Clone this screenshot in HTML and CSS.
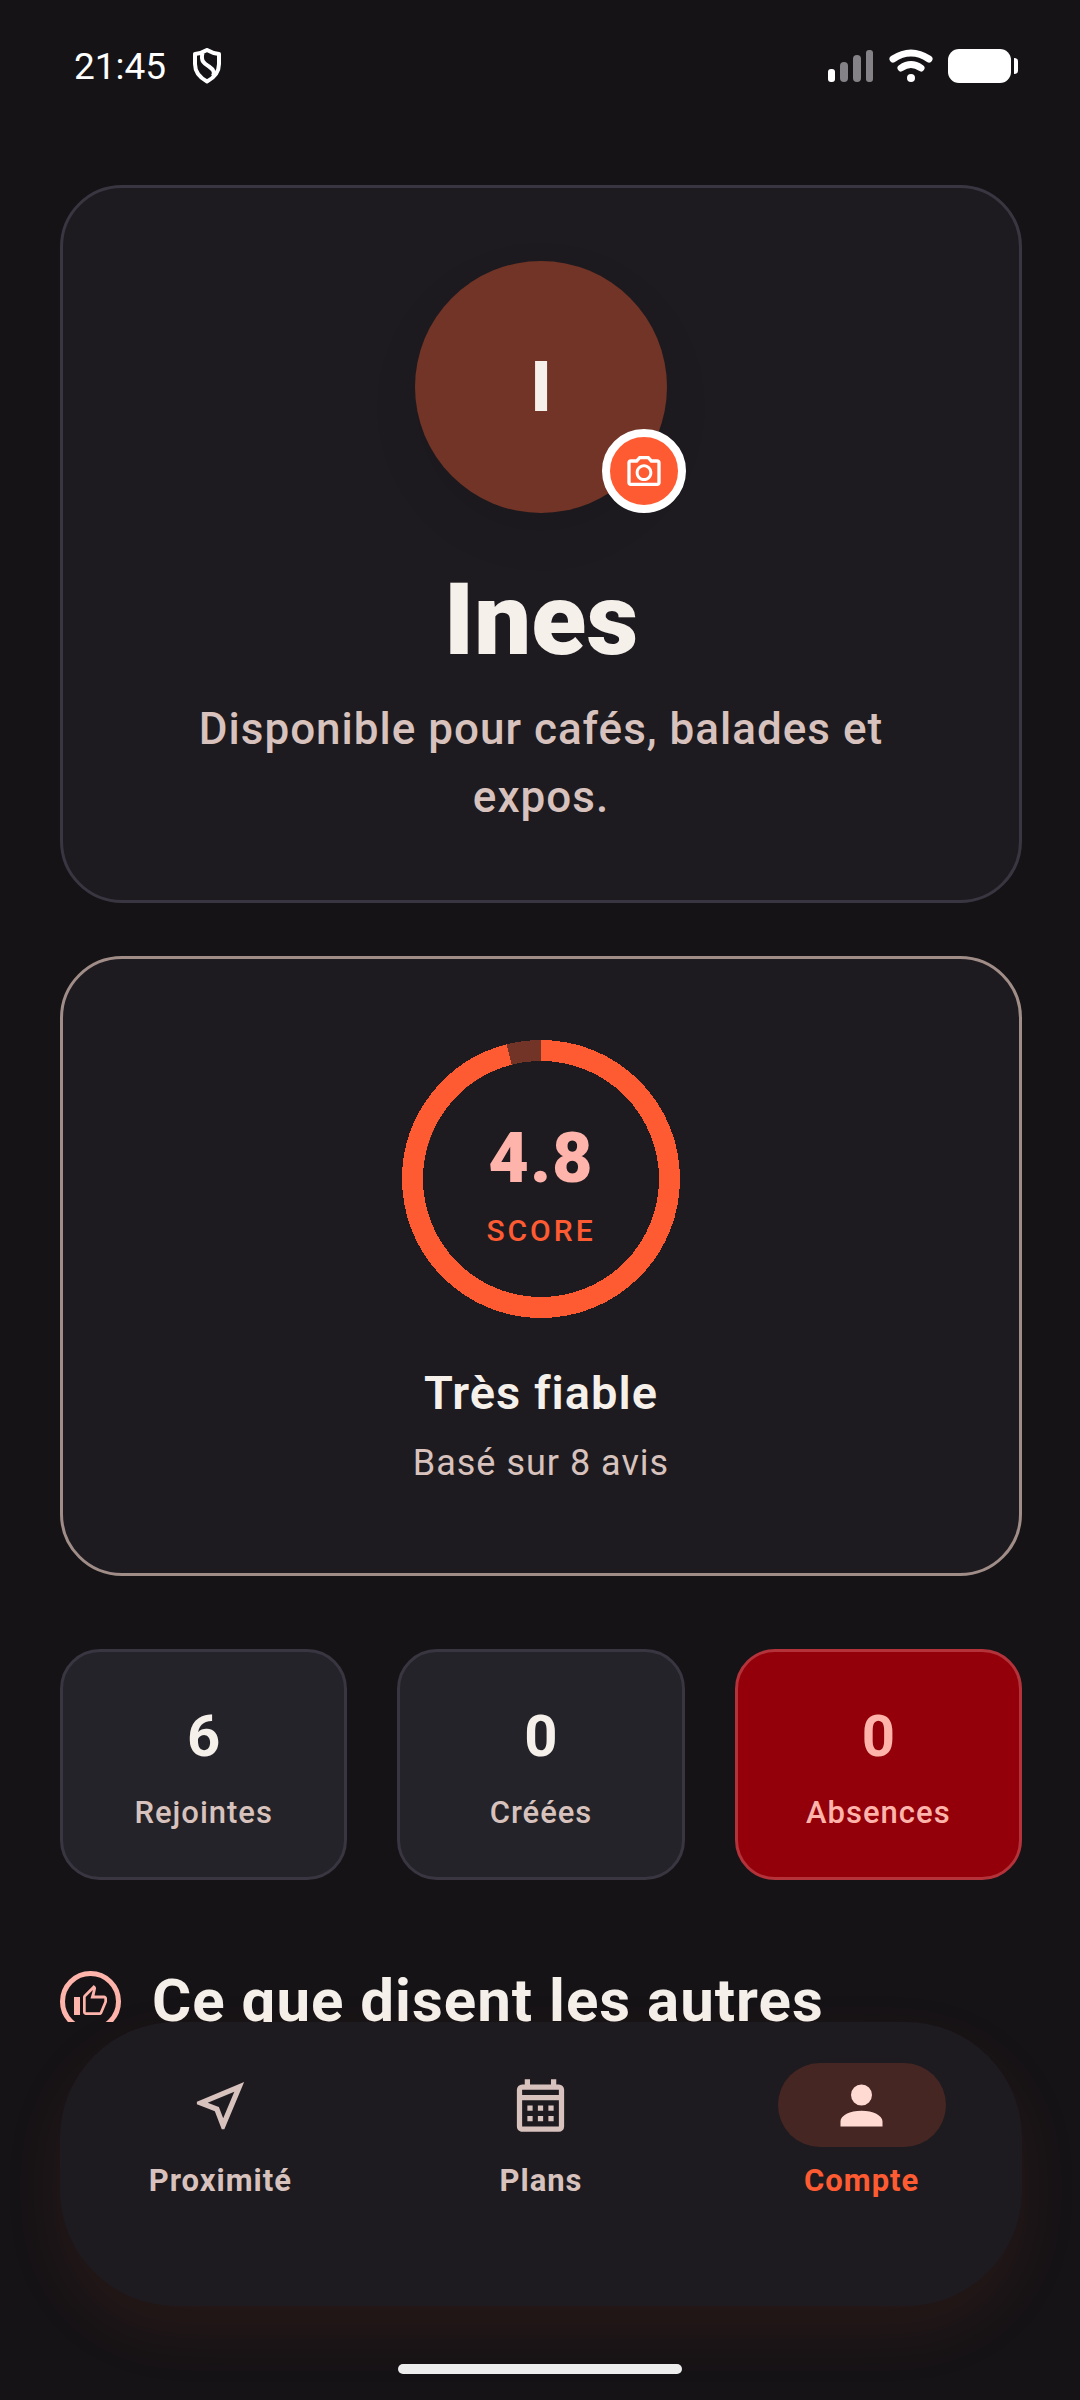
FILE: index.html
```html
<!DOCTYPE html>
<html lang="fr">
<head>
  <meta charset="utf-8">
  <meta name="viewport" content="width=device-width, initial-scale=1">
  <title>Compte</title>
  <link rel="stylesheet" href="styles.css">
</head>
<body>
  <header class="status">
    <span class="time">21:45</span>
    <svg class="shield" viewBox="0 0 30 36" aria-hidden="true">
      <path d="M15 2 Q21 5.500 27 6 V16 Q27 27 15 33.500 Q3 27 3 16 V6 Q9 5.500 15 2Z"/>
      <path d="M10.500 5 C8.500 13 12 15.500 17 18.500 C21.500 21.500 23 24 21 28"/>
    </svg>
    <div class="indicators">
      <svg class="signal" viewBox="0 0 46 34" aria-hidden="true">
        <rect x="0" y="20" width="7" height="13" rx="3"/>
        <rect class="off" x="12" y="13" width="8" height="20" rx="4"/>
        <rect class="off" x="25" y="6" width="8" height="27" rx="4"/>
        <rect class="off" x="38" y="1" width="7" height="32" rx="3"/>
      </svg>
      <svg class="wifi" viewBox="0 0 44 34" aria-hidden="true">
        <path d="M4 10 Q22 -2 40 10"/>
        <path d="M12 19 Q22 12 32 19"/>
        <circle cx="22" cy="29" r="4"/>
      </svg>
      <svg class="battery" viewBox="0 0 70 34" aria-hidden="true">
        <rect width="63" height="34" rx="11"/>
        <path d="M66 9c3 0 4 1.500 4 3.500v9c0 2-1 3.500-4 3.500z"/>
      </svg>
    </div>
  </header>

  <main class="content">
    <section class="card profile">
      <div class="avatar">
        <span class="initial">I</span>
        <button class="photo" type="button" aria-label="Changer la photo">
          <svg viewBox="0 0 24 24"><path d="M20 5h-3.170L15 3H9L7.170 5H4c-1.100 0-2 .9-2 2v12c0 1.100.9 2 2 2h16c1.100 0 2-.9 2-2V7c0-1.100-.9-2-2-2zm0 14H4V7h4.050l1.830-2h4.240l1.830 2H20v12zM12 8c-2.760 0-5 2.240-5 5s2.240 5 5 5 5-2.240 5-5-2.240-5-5-5zm0 8.200c-1.770 0-3.200-1.430-3.200-3.200s1.430-3.200 3.200-3.200 3.200 1.430 3.200 3.200-1.430 3.200-3.200 3.200z"/></svg>
        </button>
      </div>
      <h1>Ines</h1>
      <p class="bio">Disponible pour cafés, balades et expos.</p>
    </section>

    <section class="card trust">
      <div class="ring">
        <svg viewBox="0 0 278 278" shape-rendering="crispEdges" aria-hidden="true">
          <circle class="track" cx="139" cy="139" r="128.500"/>
          <circle class="value" cx="139" cy="139" r="128.500" pathLength="100" stroke-dasharray="96 4" transform="rotate(-90 139 139)"/>
        </svg>
        <strong>4.8</strong>
        <span>SCORE</span>
      </div>
      <h2>Très fiable</h2>
      <p>Basé sur 8 avis</p>
    </section>

    <div class="stats">
      <div class="stat"><strong>6</strong><span>Rejointes</span></div>
      <div class="stat"><strong>0</strong><span>Créées</span></div>
      <div class="stat danger"><strong>0</strong><span>Absences</span></div>
    </div>

    <section class="reviews">
      <svg viewBox="0 0 61 61" aria-hidden="true">
        <circle cx="30.500" cy="30.500" r="28"/>
        <path transform="translate(12.500 12.500) scale(1.500)" d="M9 21h9c.83 0 1.540-.5 1.840-1.220l3.020-7.050c.09-.23.14-.47.14-.73v-2c0-1.100-.9-2-2-2h-6.310l.95-4.570.03-.32c0-.41-.17-.79-.44-1.060L14.170 1 7.580 7.590C7.220 7.950 7 8.450 7 9v10c0 1.100.9 2 2 2zM8.800 9l4.800-4.600L12 10h9.200v2l-3 7.200h-9.400V9zM1 9h4v12H1z"/>
      </svg>
      <h2>Ce que disent les autres</h2>
    </section>
  </main>

  <nav class="tabs">
    <a href="#proximite">
      <span class="icon"><svg viewBox="0 0 24 24"><path d="M17.270 6.730l-4.240 10.130-1.320-3.420-.32-.83-.82-.32-3.430-1.330 10.130-4.230M21 3L3 10.530v.98l6.840 2.650L12.480 21h.98L21 3z"/></svg></span>
      Proximité
    </a>
    <a href="#plans">
      <span class="icon"><svg viewBox="0 0 24 24"><path d="M7,12H9V14H7V12M21,6V20A2,2 0 0,1 19,22H5C3.890,22 3,21.100 3,20V6A2,2 0 0,1 5,4H6V2H8V4H16V2H18V4H19A2,2 0 0,1 21,6M5,8H19V6H5V8M19,20V10H5V20H19M15,14V12H17V14H15M11,14V12H13V14H11M7,16H9V18H7V16M15,18V16H17V18H15M11,18V16H13V18H11Z"/></svg></span>
      Plans
    </a>
    <a href="#compte" class="active" aria-current="page">
      <span class="icon"><svg viewBox="0 0 24 24"><path d="M12,4A4,4 0 0,1 16,8A4,4 0 0,1 12,12A4,4 0 0,1 8,8A4,4 0 0,1 12,4M12,14C16.420,14 20,15.790 20,18V20H4V18C4,15.790 7.580,14 12,14Z"/></svg></span>
      Compte
    </a>
  </nav>
  <div class="home-bar"></div>
</body>
</html>
```
FILE: styles.css
```css
* {
  box-sizing: border-box;
  margin: 0;
  padding: 0;
}
body {
  display: flex;
  flex-direction: column;
  height: 100vh;
  background: #151316;
  color: #f5f0ea;
  font-family: Roboto, sans-serif;
}

/* status bar */
.status {
  display: flex;
  align-items: center;
  height: 132px;
  padding: 0 62px 0 74px;
  color: #fff;
}
.time {
  font-size: 37px;
}
.shield {
  width: 30px;
  height: 36px;
  margin-left: 26px;
  fill: none;
  stroke: #fff;
  stroke-width: 4;
  stroke-linejoin: round;
}
.indicators {
  display: flex;
  gap: 15px;
  margin-left: auto;
  fill: #fff;
}
.indicators svg {
  height: 34px;
}
.signal {
  width: 46px;
}
.signal .off {
  fill: #858287;
}
.wifi {
  width: 44px;
}
.wifi path {
  fill: none;
  stroke: #fff;
  stroke-width: 7;
  stroke-linecap: round;
}
.battery {
  width: 70px;
}

/* scrolling content */
.content {
  flex: 1;
  min-height: 0;
  overflow: hidden;
  padding: 53px 58px 0 60px;
}
.card {
  display: flex;
  flex-direction: column;
  align-items: center;
  background: #1e1b20;
  border: 3px solid #3a3641;
  border-radius: 62px;
  text-align: center;
}
.profile {
  padding: 73px 73px 69px;
}
.avatar {
  position: relative;
  display: flex;
  align-items: center;
  justify-content: center;
  width: 252px;
  height: 252px;
  border-radius: 50%;
  background: #713426;
  box-shadow: 0 20px 50px rgba(0, 0, 0, 0.08);
}
.initial {
  font-size: 70px;
  font-weight: 900;
}
.photo {
  position: absolute;
  right: -19px;
  bottom: 0;
  display: flex;
  align-items: center;
  justify-content: center;
  width: 84px;
  height: 84px;
  border: 8px solid #fff;
  border-radius: 50%;
  background: #ff5b33;
}
.photo svg {
  width: 40px;
  height: 40px;
  fill: #fff;
}
h1 {
  margin-top: 47px;
  font-size: 101px;
  font-weight: 900;
  line-height: 120px;
}
.bio {
  margin-top: 15px;
  color: #d8c2bd;
  font-size: 44px;
  font-weight: 500;
  line-height: 68px;
  letter-spacing: 1px;
}

.trust {
  margin-top: 53px;
  padding: 81px 73px 85px;
  border-color: #a08d88;
}
.ring {
  display: grid;
  grid-template-rows: 160px 1fr;
  width: 278px;
  height: 278px;
  justify-items: center;
}
.ring svg {
  grid-area: 1 / 1 / 3 / 2;
  width: 278px;
  height: 278px;
  fill: none;
  stroke-width: 21;
}
.track {
  stroke: #713426;
}
.value {
  stroke: #ff5b33;
}
.ring strong {
  grid-area: 1 / 1;
  align-self: end;
  color: #ffb4ab;
  font-size: 70px;
  font-weight: 900;
  line-height: 84px;
  letter-spacing: 1px;
}
.ring span {
  grid-area: 2 / 1;
  margin-top: 11px;
  color: #ff5b33;
  font-size: 30px;
  font-weight: 500;
  line-height: 40px;
  letter-spacing: 3px;
}
.trust h2 {
  margin-top: 45px;
  font-size: 47px;
  font-weight: 600;
  line-height: 60px;
  letter-spacing: 1px;
}
.trust p {
  margin-top: 15px;
  color: #d8c2bd;
  font-size: 36px;
  line-height: 50px;
  letter-spacing: 1px;
}

.stats {
  display: grid;
  grid-template-columns: repeat(3, 1fr);
  gap: 50px;
  margin-top: 73px;
}
.stat {
  display: flex;
  flex-direction: column;
  align-items: center;
  gap: 18px;
  padding: 48px 0 41px;
  background: #242329;
  border: 3px solid #3a3641;
  border-radius: 40px;
}
.stat strong {
  font-size: 58px;
  font-weight: 700;
  line-height: 72px;
}
.stat span {
  color: #d8c2bd;
  font-size: 31px;
  font-weight: 500;
  line-height: 46px;
  letter-spacing: 1px;
}
.danger {
  background: #93000a;
  border-color: #b4333b;
}
.danger strong, .danger span {
  color: #ffb4ab;
}

.reviews {
  display: flex;
  gap: 31px;
  align-items: center;
  margin-top: 85px;
}
.reviews svg {
  width: 61px;
  height: 61px;
  fill: #ffb4ab;
}
.reviews circle {
  fill: none;
  stroke: #ffb4ab;
  stroke-width: 5;
}
.reviews h2 {
  font-size: 60px;
  font-weight: 700;
  line-height: 72px;
  letter-spacing: 1px;
}

/* bottom tabs */
.tabs {
  position: relative;
  display: grid;
  grid-template-columns: repeat(3, 1fr);
  margin: 0 58px 58px 60px;
  padding: 41px 0 100px;
  background: #1e1b20;
  border-radius: 116px;
  box-shadow: 0 25px 64px rgba(255, 91, 51, 0.08);
}
.tabs a {
  display: flex;
  flex-direction: column;
  align-items: center;
  gap: 9px;
  color: #d8c2bd;
  font-size: 31px;
  font-weight: 700;
  line-height: 50px;
  letter-spacing: 1px;
  text-decoration: none;
}
.icon {
  display: flex;
  align-items: center;
  justify-content: center;
  width: 168px;
  height: 84px;
  border-radius: 42px;
}
.icon svg {
  width: 63px;
  height: 63px;
  fill: currentColor;
}
.tabs .active {
  color: #ff5b33;
}
.active .icon {
  background: #452623;
  color: #ffdad3;
}
.home-bar {
  position: relative;
  align-self: center;
  width: 284px;
  height: 10px;
  margin-bottom: 26px;
  border-radius: 5px;
  background: #ededed;
}
```
